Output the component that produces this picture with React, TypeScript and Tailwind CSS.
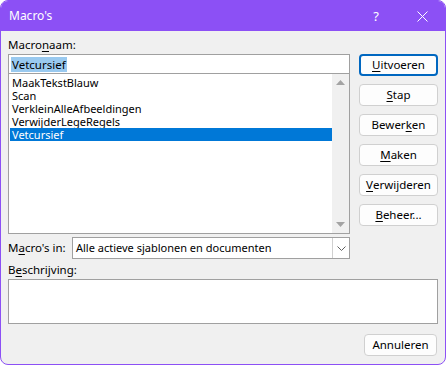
const macros = [
  "MaakTekstBlauw",
  "Scan",
  "VerkleinAlleAfbeeldingen",
  "VerwijderLegeRegels",
  "Vetcursief",
];

function Btn({ children, primary = false }: { children: React.ReactNode; primary?: boolean }) {
  return (
    <button
      className={
        "flex h-[22px] w-[79px] items-center justify-center rounded-[4px] bg-[#fdfdfd] text-[11.5px] text-black " +
        (primary ? "border-2 border-[#0067c0]" : "border border-[#d0d0d0]")
      }
    >
      {children}
    </button>
  );
}

export default function App() {
  return (
    <div className="h-[365px] w-[446px] bg-white font-['Noto_Sans',sans-serif] text-[11px] leading-[16px] text-black">
      <div className="flex h-full flex-col overflow-hidden rounded-[8px] border border-[#8c50f5] bg-[#f0f0f0]">
        {/* Title bar */}
        <div className="flex h-[30px] shrink-0 items-center bg-[#8c50f5] pl-[8px] text-[12px] text-white">
          <span className="flex-1">Macro's</span>
          <span className="w-[46px] text-center text-[13px]">?</span>
          <span className="flex w-[46px] items-center justify-center">
            <svg width="11" height="11" viewBox="0 0 11 11" stroke="white" strokeWidth="1">
              <path d="M0.5 0.5 L10.5 10.5 M10.5 0.5 L0.5 10.5" />
            </svg>
          </span>
        </div>

        {/* Body */}
        <div className="flex flex-1 flex-col px-[7px] pt-[6px]">
          <div className="flex gap-[9px]">
            <div className="flex w-[342px] flex-col">
              <div className="h-[17px] text-[11.5px]">
                Macro<span className="underline underline-offset-2">n</span>aam:
              </div>
              <div className="flex h-[20px] items-center border border-[#a0a0a0] bg-white px-[2px] text-[11.5px]">
                <span className="bg-[#99c9ef] px-px leading-[15px]">Vetcursief</span>
              </div>
              <div className="-mt-px flex h-[161px] border border-[#a0a0a0] bg-white">
                <div className="flex flex-1 flex-col pl-px pt-[2px]">
                  {macros.map((m) => (
                    <div
                      key={m}
                      className={
                        "h-[13px] pl-[2px] leading-[13px] " +
                        (m === "Vetcursief" ? "bg-[#0078d7] text-white" : "")
                      }
                    >
                      {m}
                    </div>
                  ))}
                </div>
                <div className="flex w-[17px] flex-col items-center justify-between bg-[#f0f0f0] py-[6px]">
                  <svg width="9" height="5" viewBox="0 0 9 5">
                    <path d="M0 5 L4.5 0 L9 5 Z" fill="#a3a3a3" />
                  </svg>
                  <svg width="9" height="5" viewBox="0 0 9 5">
                    <path d="M0 0 L9 0 L4.5 5 Z" fill="#a3a3a3" />
                  </svg>
                </div>
              </div>
            </div>

            <div className="flex flex-col gap-[8px] pt-[17px]">
              <Btn primary>
                <span className="underline underline-offset-2">U</span>itvoeren
              </Btn>
              <Btn>
                <span className="underline underline-offset-2">S</span>tap
              </Btn>
              <Btn>
                Bewer<span className="underline underline-offset-2">k</span>en
              </Btn>
              <Btn>
                <span className="underline underline-offset-2">M</span>aken
              </Btn>
              <Btn>
                <span className="underline underline-offset-2">V</span>erwijderen
              </Btn>
              <Btn>
                <span className="underline underline-offset-2">B</span>eheer...
              </Btn>
            </div>
          </div>

          {/* Macro's in */}
          <div className="mt-[3px] flex h-[22px] w-[342px] items-center text-[11.5px]">
            <span className="w-[64px]">
              M<span className="underline underline-offset-2">a</span>cro's in:
            </span>
            <div className="flex h-full flex-1 border border-[#a0a0a0] bg-white">
              <span className="flex-1 pl-[3px] text-[11px] leading-[20px]">Alle actieve sjablonen en documenten</span>
              <span className="flex w-[17px] items-center justify-center border-l border-[#d0d0d0]">
                <svg width="9" height="5" viewBox="0 0 9 5" fill="none" stroke="#606060" strokeWidth="1">
                  <path d="M0.5 0.5 L4.5 4.5 L8.5 0.5" />
                </svg>
              </span>
            </div>
          </div>

          <div className="mt-[3px] h-[17px] text-[11.5px]">
            B<span className="underline underline-offset-2">e</span>schrijving:
          </div>
          <div className="h-[45px] w-[430px] border border-[#a0a0a0] bg-white" />

          <div className="mt-[10px] flex justify-end pr-[1px]">
            <button className="h-[22px] w-[73px] rounded-[4px] border border-[#d0d0d0] bg-[#fdfdfd] text-[11.5px]">
              Annuleren
            </button>
          </div>
        </div>
      </div>
    </div>
  );
}
